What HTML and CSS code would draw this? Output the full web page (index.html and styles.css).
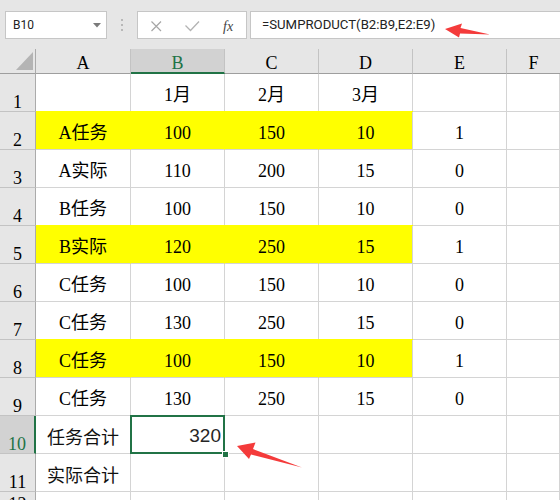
FILE: index.html
```html
<!DOCTYPE html>
<html lang="zh-CN">
<head>
<meta charset="utf-8">
<title>SUMPRODUCT</title>
<link rel="stylesheet" href="styles.css">
</head>
<body>
<div class="app">
  <div class="toolbar">
    <div class="namebox"><span>B10</span>
      <svg class="dd" width="8" height="5" viewBox="0 0 8 5"><polygon points="0,0 8,0 4,4.5" fill="#7a7a7a"/></svg>
    </div>
    <div class="grip">
      <svg width="4" height="14" viewBox="0 0 4 14"><circle cx="2" cy="2" r="1" fill="#a8a8a8"/><circle cx="2" cy="7" r="1" fill="#a8a8a8"/><circle cx="2" cy="12" r="1" fill="#a8a8a8"/></svg>
    </div>
    <div class="fxbtns">
      <svg width="108" height="26" viewBox="0 0 108 26">
        <path d="M13.5 9.5 L23 19 M23 9.5 L13.5 19" stroke="#a6a6a6" stroke-width="1.2" fill="none"/>
        <path d="M47.5 13.5 L52.5 18.5 L61 9.5" stroke="#b3b3b3" stroke-width="1.3" fill="none"/>
        <text x="85" y="18.5" class="fx">fx</text>
      </svg>
    </div>
    <div class="formula">=SUMPRODUCT(B2:B9,E2:E9)</div>
  </div>

  <div class="sheet">
    <div class="row head">
      <div class="corner"><svg width="35" height="24" viewBox="0 0 35 24"><polygon points="16,21 33,3 33,21" fill="#b4b4b4"/></svg></div>
      <div class="ch">A</div>
      <div class="ch sel">B</div>
      <div class="ch">C</div>
      <div class="ch">D</div>
      <div class="ch">E</div>
      <div class="ch last">F</div>
    </div>

    <div class="row">
      <div class="rh">1</div>
      <div class="c"></div><div class="c">1月</div><div class="c">2月</div><div class="c">3月</div><div class="c"></div><div class="c"></div>
    </div>
    <div class="row">
      <div class="rh">2</div>
      <div class="c y">A任务</div><div class="c y">100</div><div class="c y">150</div><div class="c y end">10</div><div class="c">1</div><div class="c"></div>
    </div>
    <div class="row">
      <div class="rh">3</div>
      <div class="c">A实际</div><div class="c">110</div><div class="c">200</div><div class="c">15</div><div class="c">0</div><div class="c"></div>
    </div>
    <div class="row">
      <div class="rh">4</div>
      <div class="c">B任务</div><div class="c">100</div><div class="c">150</div><div class="c">10</div><div class="c">0</div><div class="c"></div>
    </div>
    <div class="row">
      <div class="rh">5</div>
      <div class="c y">B实际</div><div class="c y">120</div><div class="c y">250</div><div class="c y end">15</div><div class="c">1</div><div class="c"></div>
    </div>
    <div class="row">
      <div class="rh">6</div>
      <div class="c">C任务</div><div class="c">100</div><div class="c">150</div><div class="c">10</div><div class="c">0</div><div class="c"></div>
    </div>
    <div class="row">
      <div class="rh">7</div>
      <div class="c">C任务</div><div class="c">130</div><div class="c">250</div><div class="c">15</div><div class="c">0</div><div class="c"></div>
    </div>
    <div class="row">
      <div class="rh">8</div>
      <div class="c y">C任务</div><div class="c y">100</div><div class="c y">150</div><div class="c y end">10</div><div class="c">1</div><div class="c"></div>
    </div>
    <div class="row">
      <div class="rh">9</div>
      <div class="c">C任务</div><div class="c">130</div><div class="c">250</div><div class="c">15</div><div class="c">0</div><div class="c"></div>
    </div>
    <div class="row">
      <div class="rh sel">10</div>
      <div class="c left">任务合计</div><div class="c right selcell">320</div><div class="c"></div><div class="c"></div><div class="c"></div><div class="c"></div>
    </div>
    <div class="row">
      <div class="rh">11</div>
      <div class="c left">实际合计</div><div class="c"></div><div class="c"></div><div class="c"></div><div class="c"></div><div class="c"></div>
    </div>
    <div class="row short">
      <div class="rh">12</div>
      <div class="c"></div><div class="c"></div><div class="c"></div><div class="c"></div><div class="c"></div><div class="c"></div>
    </div>
  </div>

  <svg class="annot" width="560" height="500" viewBox="0 0 560 500">
    <polygon points="445,29 462,23.5 460.5,28 490,34.5 460,33.5 459,37.5" fill="#f43b3b"/>
    <polygon points="237,446 255.5,442.5 253,449 302,467.5 251,454.5 249,459" fill="#f43b3b"/>
  </svg>
</div>
</body>
</html>
```

FILE: styles.css
```css
html, body {
  margin: 0;
  padding: 0;
  width: 560px;
  height: 500px;
  overflow: hidden;
  background: #ffffff;
}

.app {
  position: relative;
  width: 560px;
  height: 500px;
  overflow: hidden;
}

/* ---------- toolbar ---------- */
.toolbar {
  height: 49px;
  box-sizing: border-box;
  background: #e6e6e6;
  display: flex;
  align-items: flex-start;
  padding: 11px 0 0 5px;
}

.namebox {
  width: 102px;
  height: 28px;
  box-sizing: border-box;
  border: 1px solid #c6c6c6;
  background: #fff;
  display: flex;
  align-items: center;
  justify-content: space-between;
  padding: 0 5px 0 7px;
  font: 12px/1 Roboto, "Liberation Sans", sans-serif;
  color: #222;
}

.namebox .dd {
  display: block;
}

.grip {
  width: 30px;
  height: 28px;
  display: flex;
  align-items: center;
  justify-content: center;
}

.grip svg {
  display: block;
}

.fxbtns {
  width: 110px;
  height: 28px;
  box-sizing: border-box;
  border: 1px solid #c6c6c6;
  background: #fff;
}

.fxbtns svg {
  display: block;
}

.fx {
  font-family: "Liberation Serif", serif;
  font-style: italic;
  font-size: 14px;
  fill: #444;
}

.formula {
  flex: 1;
  height: 28px;
  box-sizing: border-box;
  margin-left: 3px;
  margin-right: -4px;
  border: 1px solid #c6c6c6;
  background: #fff;
  display: flex;
  align-items: center;
  padding-left: 11px;
  font: 13.2px/1 Roboto, "Liberation Sans", sans-serif;
  color: #222;
  white-space: nowrap;
}

/* ---------- sheet ---------- */
.sheet {
  display: flex;
  flex-direction: column;
}

.row {
  display: grid;
  grid-template-columns: 36px 95px 94px 94px 94px 94px 1fr;
  height: 38px;
}

.row.head {
  height: 25px;
}

.row.short {
  height: 22px;
}

.row > div {
  box-sizing: border-box;
  display: flex;
  justify-content: center;
  font: 18px/18px "Liberation Serif", "Noto Sans CJK SC", serif;
  color: #000;
  white-space: nowrap;
}

.corner {
  background: #e6e6e6;
  border-right: 1px solid #ababab;
  border-bottom: 1px solid #9e9e9e;
}

.corner svg {
  display: block;
}

.ch {
  background: #e6e6e6;
  border-right: 1px solid #c3c3c3;
  border-bottom: 1px solid #9e9e9e;
  align-items: flex-start;
  padding-top: 5px;
}

.ch.sel {
  background: #d2d2d2;
  color: #217346;
  border-bottom: 2px solid #217346;
}

.ch.last {
  border-right: none;
}

.rh {
  background: #e6e6e6;
  border-right: 1px solid #ababab;
  border-bottom: 1px solid #c3c3c3;
  align-items: flex-end;
}

.rh.sel {
  background: #d2d2d2;
  color: #217346;
  border-right: 2px solid #217346;
}

.c {
  border-right: 1px solid #d4d4d4;
  border-bottom: 1px solid #d4d4d4;
  align-items: center;
  padding-top: 4px;
}

.c.y {
  background: #ffff00;
  border-right-color: #ffff00;
  box-shadow: 0 -1px 0 #ffff00;
}

.c.y.end {
  border-right-color: #d4d4d4;
}

.row > .c.left {
  justify-content: flex-start;
  padding-left: 11px;
  padding-top: 2px;
  font-family: "Noto Sans CJK SC", "Liberation Sans", sans-serif;
  color: #111;
}

.row > .c.right {
  justify-content: flex-end;
  padding-right: 3px;
  padding-top: 1px;
  font: 19px/19px "Liberation Sans", Arial, sans-serif;
  color: #262626;
}

.selcell {
  position: relative;
  z-index: 2;
}

.selcell::after {
  content: "";
  position: absolute;
  left: -1px;
  top: -1px;
  right: -1px;
  bottom: -1px;
  border: 2px solid #217346;
}

.selcell::before {
  content: "";
  position: absolute;
  right: -5px;
  bottom: -5px;
  width: 5px;
  height: 5px;
  background: #217346;
  border: 1px solid #ffffff;
  z-index: 3;
}

.annot {
  position: absolute;
  left: 0;
  top: 0;
  pointer-events: none;
  z-index: 10;
}
```
